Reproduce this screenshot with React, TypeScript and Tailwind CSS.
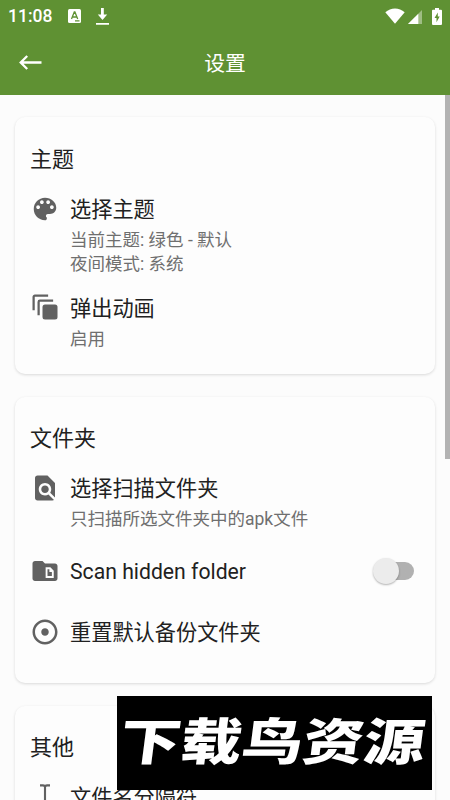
import { useState } from 'react'
import type { ReactNode } from 'react'
import { MdAdjust, MdFindInPage } from 'react-icons/md'

function PaletteIcon() {
  return (
    <svg viewBox="0 0 24 24" className="w-[30px] h-[30px]" fill="currentColor">
      <path d="M12 3c-4.970 0-9 4.030-9 9s4.030 9 9 9c.83 0 1.500-.67 1.500-1.500 0-.39-.15-.74-.39-1.010-.23-.26-.38-.61-.38-.99 0-.83.67-1.500 1.500-1.500H16c2.760 0 5-2.240 5-5 0-4.420-4.030-8-9-8zm-5.500 9c-.83 0-1.500-.67-1.500-1.500S5.670 9 6.500 9 8 9.670 8 10.500 7.330 12 6.500 12zm3-4C8.670 8 8 7.330 8 6.500S8.670 5 9.500 5s1.500.67 1.500 1.500S10.330 8 9.500 8zm5 0c-.83 0-1.500-.67-1.500-1.500S13.670 5 14.500 5s1.500.67 1.500 1.500S15.330 8 14.500 8zm3 4c-.83 0-1.500-.67-1.500-1.500S16.670 9 17.500 9s1.500.67 1.500 1.500-.67 1.500-1.500 1.500z" />
    </svg>
  )
}

function AnimationIcon() {
  return (
    <svg viewBox="0 0 24 24" className="-mt-px w-[30px] h-[30px]" fill="none">
      <path d="M2.900 14.500V3.900a1 1 0 0 1 1-1H14.500" stroke="currentColor" strokeWidth="1.800" />
      <path d="M6.900 18.500V7.900a1 1 0 0 1 1-1H18.500" stroke="currentColor" strokeWidth="1.800" />
      <rect x="10" y="10" width="12" height="12" rx="2" fill="currentColor" />
    </svg>
  )
}

function HiddenFolderIcon() {
  return (
    <svg viewBox="0 0 24 24" className="w-[30px] h-[30px]" fill="currentColor" fillRule="evenodd">
      <path d="M20 6h-8l-2-2H4c-1.100 0-2 .9-2 2v12c0 1.100.9 2 2 2h16c1.100 0 2-.9 2-2V8c0-1.100-.9-2-2-2zM12.500 9h3.800l2.700 2.700V17.500H12.500zM14 10.500v5.500h3.500v-3.200h-2v-2.300z" />
    </svg>
  )
}

function CursorIcon() {
  return (
    <svg viewBox="0 0 24 24" className="w-[30px] h-[30px]" fill="none" stroke="currentColor" strokeWidth="1.700">
      <path d="M8 2.700h2.300c1 0 1.700.5 1.700 1.300 0-.8.7-1.300 1.700-1.300H16M12 4v16M8 21.300h8" />
    </svg>
  )
}

function StatusBar() {
  return (
    <div className="flex h-8 items-center justify-between px-2 text-white">
      <div className="flex items-center">
        <span className="w-[60px] text-[17.5px] font-medium leading-8">11:08</span>
        <svg viewBox="0 0 13 14" className="h-[14px] w-[13px]">
          <rect width="13" height="14" rx="1.5" fill="white" />
          <path d="M3.500 10 6.300 3h.6l2.800 7M4.500 8h4.200M7 11.900h4.500" stroke="#5f9133" strokeWidth="1.300" fill="none" />
        </svg>
        <svg viewBox="0 0 13 17" className="ml-[14.5px] h-[17px] w-[13px]" fill="white">
          <path d="M5 0h2.800v6.500h3.400L6.500 12 1.800 6.500H5zM0 15h13v1.800H0z" />
        </svg>
      </div>
      <div className="flex items-center">
        <svg viewBox="0 0 20 16" className="h-4 w-5" fill="white">
          <path d="M.3 4.200C5.800-.9 14.200-.9 19.700 4.200L10 15.700z" />
        </svg>
        <svg viewBox="0 0 14 14" className="ml-[3px] mt-0.5 h-[14px] w-[14px]" fill="white">
          <path d="M0 14 14 0v14z" opacity=".4" />
          <path d="M0 14 10.300 3.700V14z" />
        </svg>
        <svg viewBox="0 0 10 17" className="ml-[10px] h-[17px] w-[10px]" fill="white">
          <path d="M3 0h4v1.700h2a1 1 0 0 1 1 1V16a1 1 0 0 1-1 1H1a1 1 0 0 1-1-1V2.700a1 1 0 0 1 1-1h2z" />
          <path d="M5.800 4.500 2.500 10h2v4.200L7.700 8.500H5.800z" fill="#5f9133" />
        </svg>
      </div>
    </div>
  )
}

function Card({ title, className = '', children }: { title: string; className?: string; children: ReactNode }) {
  return (
    <section className={`rounded-[10px] bg-[#fdfdfd] px-4 shadow-[0_1px_3px_rgba(0,0,0,0.14)] ${className}`}>
      <h2 className="-ml-px text-[22px] leading-7">{title}</h2>
      {children}
    </section>
  )
}

interface RowProps {
  icon: ReactNode
  title: string
  lines?: string[]
  action?: ReactNode
  className?: string
}

function Row({ icon, title, lines = [], action, className = '' }: RowProps) {
  return (
    <div className={`flex items-start ${className}`}>
      <div className="-ml-px mr-[10px] -mt-[2px] flex-none text-[#616161]">{icon}</div>
      <div className="flex-1">
        <div className="whitespace-nowrap text-[21.2px] leading-7">{title}</div>
        {lines.length > 0 && (
          <div className="mt-1 text-[17.5px] leading-6 text-[#6f6f6f]">
            {lines.map(line => <p key={line}>{line}</p>)}
          </div>
        )}
      </div>
      {action}
    </div>
  )
}

function Toggle() {
  const [on, setOn] = useState(false)

  return (
    <button
      role="switch"
      aria-checked={on}
      aria-label="Scan hidden folder"
      onClick={() => setOn(!on)}
      className="mr-[5px] flex h-[26px] w-[41px] items-center"
    >
      <span className="flex h-[18px] w-[41px] items-center rounded-full bg-gradient-to-r from-transparent from-30% to-[#b1b1b1] to-30%">
        <span className={`h-[26px] w-[26px] flex-none rounded-full bg-[#ececec] shadow-[0_1px_2px_rgba(0,0,0,0.3)] ${on ? 'ml-[15px]' : ''}`} />
      </span>
    </button>
  )
}

export default function App() {
  return (
    <div className="relative flex h-[800px] w-[450px] flex-col overflow-hidden bg-[#fcfcfc] font-['Roboto','Noto_Sans_CJK_SC',sans-serif] text-[#212121]">
      <header className="h-[95px] flex-none bg-[#5f9133]">
        <StatusBar />
        <div className="grid h-[62px] grid-cols-[1fr_auto_1fr] items-center text-white">
          <svg viewBox="0 0 23 15" className="mb-px ml-[19px] h-[15px] w-[23px]" fill="none" stroke="white" strokeWidth="2.300">
            <path d="M22.500 7.500H2M8.200 1 1.700 7.500l6.500 6.500" />
          </svg>
          <h1 className="pt-px text-[20.8px] leading-7">设置</h1>
        </div>
      </header>

      <div className="flex min-h-0 flex-1">
        <main className="ml-[15px] mt-[22px] flex w-[420px] flex-none flex-col gap-[23px]">
          <Card title="主题" className="h-[257px] flex-none pt-[29px]">
            <Row
              className="mt-[22px]"
              icon={<PaletteIcon />}
              title="选择主题"
              lines={['当前主题: 绿色 - 默认', '夜间模式: 系统']}
            />
            <Row className="mt-[19px]" icon={<AnimationIcon />} title="弹出动画" lines={['启用']} />
          </Card>

          <Card title="文件夹" className="h-[286px] flex-none pt-[28px]">
            <Row
              className="mt-[22px]"
              icon={<MdFindInPage size={30} />}
              title="选择扫描文件夹"
              lines={['只扫描所选文件夹中的apk文件']}
            />
            <Row className="mt-[27px]" icon={<HiddenFolderIcon />} title="Scan hidden folder" action={<Toggle />} />
            <Row className="mt-[33px]" icon={<MdAdjust size={30} />} title="重置默认备份文件夹" />
          </Card>

          <Card title="其他" className="h-[200px] flex-none pt-[28px]">
            <Row className="mt-[22px]" icon={<CursorIcon />} title="文件名分隔符" />
          </Card>
        </main>
        <div className="ml-[10px] h-[364px] w-[5px] bg-[#b3b3b3]" />
      </div>

      {/* Site watermark */}
      <div className="absolute left-[117px] top-[696px] flex h-[94px] w-[315px] items-center justify-center overflow-hidden bg-black">
        <span className="mr-1 -skew-x-6 scale-y-[0.82] whitespace-nowrap text-[61px] font-black leading-none text-white">
          下载鸟资源
        </span>
      </div>
    </div>
  )
}
